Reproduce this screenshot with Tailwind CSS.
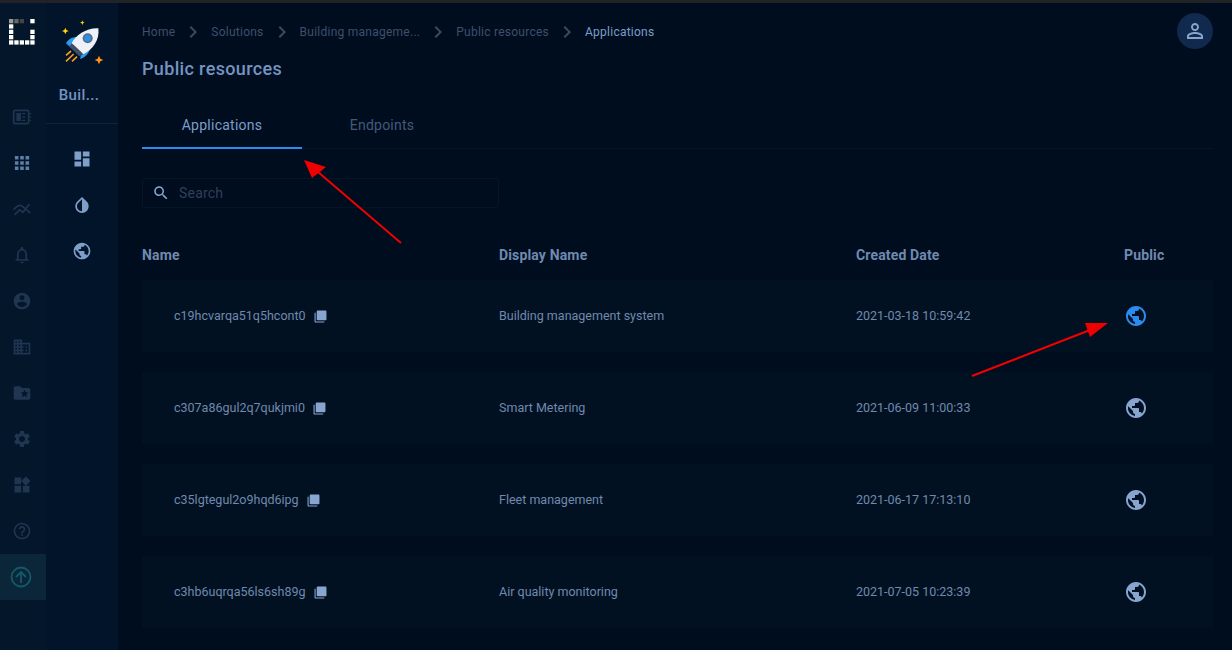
<!DOCTYPE html>
<html lang="en">
<head>
    <meta charset="UTF-8">
    <title>Applications</title>
    <script src="https://cdn.jsdelivr.net/npm/@tailwindcss/browser@4"></script>
</head>
<body class="bg-[#000d1f] font-['Roboto',sans-serif] overflow-hidden">
<div class="relative w-[1232px] h-[650px] overflow-hidden flex flex-col">
    <div class="h-[3px] bg-[#222326] shrink-0"></div>
    <div class="flex flex-1 min-h-0">
        <!-- Main rail -->
        <aside class="w-[46px] shrink-0 bg-[#03162a] flex flex-col items-center">
            <svg class="mt-[16px] mb-[49px] mr-[2px]" width="26" height="26" viewBox="0 0 26 26">
                <rect x="0" y="0" width="4.3" height="4.3" fill="#999"/><rect x="5.3" y="0" width="4.3" height="4.3" fill="#666"/><rect x="10.7" y="0" width="4.3" height="4.3" fill="#444"/><rect x="21.3" y="0" width="4.3" height="4.3" fill="#fff"/>
                <rect x="0" y="5.3" width="4.3" height="4.3" fill="#fff"/>
                <rect x="0" y="10.7" width="4.3" height="4.3" fill="#fff"/><rect x="21.3" y="10.7" width="4.3" height="4.3" fill="#fff"/>
                <rect x="0" y="16" width="4.3" height="4.3" fill="#fff"/><rect x="21.3" y="16" width="4.3" height="4.3" fill="#fff"/>
                <rect x="0" y="21.3" width="4.3" height="4.3" fill="#fff"/><rect x="5.3" y="21.3" width="4.3" height="4.3" fill="#fff"/><rect x="10.7" y="21.3" width="4.3" height="4.3" fill="#fff"/><rect x="16" y="21.3" width="4.3" height="4.3" fill="#fff"/><rect x="21.3" y="21.3" width="4.3" height="4.3" fill="#fff"/>
            </svg>
            <div class="flex flex-col w-full text-[#1f3550]">
                <div class="h-[46px] pr-[3px] flex items-center justify-center"><svg class="w-[20px] h-[20px]" viewBox="0 0 24 24" fill="none" stroke="currentColor" stroke-width="2"><rect x="2" y="4" width="18" height="16" rx="2"/><path d="M6 8h4v8H6zM12 8h4M12 12h4M12 16h4" fill="currentColor" stroke-width="1.5"/><path d="M21 8h2M21 12h2M21 16h2" stroke-width="1.5"/></svg></div>
                <div class="h-[46px] pr-[3px] flex items-center justify-center text-[#5f7ea8]"><svg class="w-[16px] h-[16px]" viewBox="3 3 18 18" fill="currentColor"><path d="M4 8h4V4H4v4zm6 12h4v-4h-4v4zm-6 0h4v-4H4v4zm0-6h4v-4H4v4zm6 0h4v-4h-4v4zm6-10v4h4V4h-4zm-6 4h4V4h-4v4zm6 6h4v-4h-4v4zm0 6h4v-4h-4v4z"/></svg></div>
                <div class="h-[46px] pr-[3px] flex items-center justify-center"><svg class="w-[20px] h-[20px]" viewBox="0 0 24 24" fill="none" stroke="currentColor" stroke-width="2"><path d="M2 13C5 9 8 7 11 8s7 6 11 9"/><path d="M3 19l6-6 4 3 8-10"/></svg></div>
                <div class="h-[46px] pr-[3px] flex items-center justify-center"><svg class="w-[20px] h-[20px]" viewBox="0 0 24 24" fill="currentColor"><path d="M12 22c1.1 0 2-.9 2-2h-4c0 1.1.9 2 2 2zm6-6v-5c0-3.07-1.63-5.64-4.5-6.32V4c0-.83-.67-1.5-1.5-1.5s-1.5.67-1.5 1.5v.68C7.64 5.36 6 7.92 6 11v5l-2 2v1h16v-1l-2-2zm-2 1H8v-6c0-2.48 1.51-4.5 4-4.5s4 2.02 4 4.5v6z"/></svg></div>
                <div class="h-[46px] pr-[3px] flex items-center justify-center"><svg class="w-[20px] h-[20px]" viewBox="0 0 24 24" fill="currentColor"><path d="M12 2C6.48 2 2 6.48 2 12s4.48 10 10 10 10-4.48 10-10S17.52 2 12 2zm0 3c1.66 0 3 1.34 3 3s-1.34 3-3 3-3-1.34-3-3 1.34-3 3-3zm0 14.2c-2.5 0-4.71-1.28-6-3.22.03-1.99 4-3.08 6-3.08 1.99 0 5.97 1.09 6 3.08-1.29 1.94-3.5 3.22-6 3.22z"/></svg></div>
                <div class="h-[46px] pr-[3px] flex items-center justify-center"><svg class="w-[20px] h-[20px]" viewBox="0 0 24 24" fill="currentColor"><path d="M12 7V3H2v18h20V7H12zM6 19H4v-2h2v2zm0-4H4v-2h2v2zm0-4H4V9h2v2zm0-4H4V5h2v2zm4 12H8v-2h2v2zm0-4H8v-2h2v2zm0-4H8V9h2v2zm0-4H8V5h2v2zm10 12h-8v-2h2v-2h-2v-2h2v-2h-2V9h8v10zm-2-8h-2v2h2v-2zm0 4h-2v2h2v-2z"/></svg></div>
                <div class="h-[46px] pr-[3px] flex items-center justify-center"><svg class="w-[20px] h-[20px]" viewBox="0 0 24 24" fill="currentColor"><path d="M20 6h-8l-2-2H4c-1.1 0-1.99.9-1.99 2L2 18c0 1.1.9 2 2 2h16c1.1 0 2-.9 2-2V8c0-1.1-.9-2-2-2zm-2.06 11L15 15.28 12.06 17l.78-3.33-2.59-2.24 3.41-.29L15 8l1.34 3.14 3.41.29-2.59 2.24.78 3.33z"/></svg></div>
                <div class="h-[46px] pr-[3px] flex items-center justify-center"><svg class="w-[20px] h-[20px]" viewBox="0 0 24 24" fill="currentColor"><path d="M19.14 12.94c.04-.3.06-.61.06-.94 0-.32-.02-.64-.07-.94l2.03-1.58c.18-.14.23-.41.12-.61l-1.92-3.32c-.12-.22-.37-.29-.59-.22l-2.39.96c-.5-.38-1.03-.7-1.62-.94l-.36-2.54c-.04-.24-.24-.41-.48-.41h-3.84c-.24 0-.43.17-.47.41l-.36 2.54c-.59.24-1.13.57-1.62.94l-2.39-.96c-.22-.08-.47 0-.59.22L2.74 8.87c-.12.21-.08.47.12.61l2.03 1.58c-.05.3-.09.63-.09.94s.02.64.07.94l-2.03 1.58c-.18.14-.23.41-.12.61l1.92 3.32c.12.22.37.29.59.22l2.39-.96c.5.38 1.03.7 1.62.94l.36 2.54c.05.24.24.41.48.41h3.84c.24 0 .44-.17.47-.41l.36-2.54c.59-.24 1.13-.56 1.62-.94l2.39.96c.22.08.47 0 .59-.22l1.92-3.32c.12-.22.07-.47-.12-.61l-2.01-1.58zM12 15.6c-1.98 0-3.6-1.62-3.6-3.6s1.62-3.6 3.6-3.6 3.6 1.62 3.6 3.6-1.62 3.6-3.6 3.6z"/></svg></div>
                <div class="h-[46px] pr-[3px] flex items-center justify-center"><svg class="w-[20px] h-[20px]" viewBox="0 0 24 24" fill="currentColor"><path d="M13 13v8h8v-8h-8zM3 21h8v-8H3v8zM3 3v8h8V3H3zm13.66-1.31L11 7.34 16.66 13l5.66-5.66-5.66-5.65z"/></svg></div>
                <div class="h-[46px] pr-[3px] flex items-center justify-center"><svg class="w-[20px] h-[20px]" viewBox="0 0 24 24" fill="currentColor"><path d="M11 18h2v-2h-2v2zm1-16C6.48 2 2 6.48 2 12s4.48 10 10 10 10-4.48 10-10S17.52 2 12 2zm0 18c-4.41 0-8-3.59-8-8s3.59-8 8-8 8 3.59 8 8-3.59 8-8 8zm0-14c-2.21 0-4 1.79-4 4h2c0-1.1.9-2 2-2s2 .9 2 2c0 2-3 1.75-3 5h2c0-2.25 3-2.5 3-5 0-2.21-1.79-4-4-4z"/></svg></div>
                <div class="h-[46px] pr-[4px] flex items-center justify-center bg-[#0b2638] text-[#125a6b]"><svg class="w-[22px] h-[22px]" viewBox="0 0 22 22" fill="none" stroke="currentColor" stroke-width="1.8"><circle cx="11" cy="11" r="9.5"/><path d="M11 17V6M6 11l5-5 5 5"/></svg></div>
            </div>
        </aside>

        <!-- Solution rail -->
        <aside class="w-[72px] shrink-0 bg-[#02142a] flex flex-col items-center">
            <div class="w-full h-[121px] border-b border-[#0e2338] flex flex-col items-center">
                <svg class="mt-[12px]" width="55" height="55" viewBox="0 0 165 165">
                    <path d="M31 38l3 7 7 3-7 3-3 7-3-7-7-3 7-3z" fill="#ffd60a"/>
                    <path d="M82 16l2 5 5 2-5 2-2 5-2-5-5-2 5-2z" fill="#ffd60a"/>
                    <path d="M132 122l4 9 9 4-9 4-4 9-4-9-9-4 9-4z" fill="#ff9417"/>
                    <path d="M33 85C40 72 52 66 66 66L48 98z" fill="#2a9bf0"/>
                    <path d="M82 102L75 132C92 127 104 114 105 96z" fill="#2a9bf0"/>
                    <path d="M130 40C135 75 112 105 85 118L50 85C62 60 95 38 130 40z" fill="#eef1f7"/>
                    <path d="M50 85L85 118L73 124L43 95z" fill="#3f4d66"/>
                    <circle cx="98" cy="70" r="15" fill="#5a6b85"/>
                    <circle cx="98" cy="70" r="10" fill="#2a8fe0"/>
                    <path d="M48 108L33 121M56 117L33 139M66 125L51 139" stroke="#f59a23" stroke-width="5" fill="none"/>
                </svg>
                <div class="mt-[15px] mr-[6px] text-[15px] leading-[20px] font-medium tracking-[0.35px] text-[#7294c4]">Buil...</div>
            </div>
            <div class="w-full flex flex-col text-[#7f9ec9]">
                <div class="h-[46px] mt-[12px] flex items-center justify-center"><svg class="w-[20px] h-[20px]" viewBox="0 0 24 24" fill="currentColor"><path d="M3 13h8V3H3v10zm0 8h8v-6H3v6zm10 0h8V11h-8v10zm0-18v6h8V3h-8z"/></svg></div>
                <div class="h-[46px] flex items-center justify-center"><svg class="w-[20px] h-[20px]" viewBox="0 0 24 24" fill="currentColor"><path d="M17.66 7.93L12 2.27 6.34 7.93c-3.12 3.12-3.12 8.19 0 11.31C7.9 20.8 9.95 21.58 12 21.58c2.05 0 4.1-.78 5.66-2.34 3.12-3.12 3.12-8.19 0-11.31zM12 19.59c-1.6 0-3.11-.62-4.24-1.76C6.62 16.69 6 15.19 6 13.59s.62-3.11 1.76-4.24L12 5.1v14.49z"/></svg></div>
                <div class="h-[46px] flex items-center justify-center"><svg class="w-[20px] h-[20px]" viewBox="0 0 24 24" fill="currentColor"><path d="M12 2C6.48 2 2 6.48 2 12s4.48 10 10 10 10-4.48 10-10S17.52 2 12 2zm-1 17.93c-3.95-.49-7-3.85-7-7.93 0-.62.08-1.21.21-1.79L9 15v1c0 1.1.9 2 2 2v1.93zm6.9-2.54c-.26-.81-1-1.39-1.9-1.39h-1v-3c0-.55-.45-1-1-1H8v-2h2c.55 0 1-.45 1-1V7h2c1.1 0 2-.9 2-2v-.41c2.93 1.19 5 4.06 5 7.41 0 2.08-.8 3.97-2.1 5.39z"/></svg></div>
            </div>
        </aside>

        <!-- Content -->
        <main class="flex-1 min-w-0 pl-[24px] pr-[19px]">
            <div class="flex items-center justify-between h-[56px]">
                <nav class="flex items-center text-[12px] tracking-[0.25px] text-[#3c506b] mt-[1px]">
                    <span>Home</span>
                    <svg class="w-[24px] h-[24px] mx-[6px] text-[#3c4a5e]" viewBox="0 0 24 24" fill="currentColor"><path d="M10 6L8.59 7.41 13.17 12l-4.58 4.59L10 18l6-6z"/></svg>
                    <span>Solutions</span>
                    <svg class="w-[24px] h-[24px] mx-[6px] text-[#3c4a5e]" viewBox="0 0 24 24" fill="currentColor"><path d="M10 6L8.59 7.41 13.17 12l-4.58 4.59L10 18l6-6z"/></svg>
                    <span>Building manageme...</span>
                    <svg class="w-[24px] h-[24px] mx-[6px] text-[#3c4a5e]" viewBox="0 0 24 24" fill="currentColor"><path d="M10 6L8.59 7.41 13.17 12l-4.58 4.59L10 18l6-6z"/></svg>
                    <span>Public resources</span>
                    <svg class="w-[24px] h-[24px] mx-[6px] text-[#3c4a5e]" viewBox="0 0 24 24" fill="currentColor"><path d="M10 6L8.59 7.41 13.17 12l-4.58 4.59L10 18l6-6z"/></svg>
                    <span class="text-[#7c9dc9]">Applications</span>
                </nav>
                <div class="w-[36px] h-[36px] rounded-full bg-[#10294d] flex items-center justify-center text-[#87a5cf]">
                    <svg class="w-[24px] h-[24px]" viewBox="0 0 24 24" fill="currentColor"><path d="M12 5.9c1.16 0 2.1.94 2.1 2.1s-.94 2.1-2.1 2.1S9.9 9.16 9.9 8s.94-2.1 2.1-2.1m0 9c2.97 0 6.1 1.46 6.1 2.1v1.1H5.9V17c0-.64 3.13-2.1 6.1-2.1M12 4C9.79 4 8 5.79 8 8s1.79 4 4 4 4-1.79 4-4-1.79-4-4-4zm0 9c-2.67 0-8 1.34-8 4v3h16v-3c0-2.66-5.33-4-8-4z"/></svg>
                </div>
            </div>
            <h1 class="text-[18px] leading-[20px] font-medium tracking-[0.35px] text-[#7594c0]">Public resources</h1>

            <!-- Tabs -->
            <div class="mt-[20px] flex h-[50px] border-b border-[#04172a]">
                <div class="w-[160px] h-[50px] pt-[5px] border-b-2 border-[#2b8cf0] flex items-center justify-center text-[14px] tracking-[0.25px] text-[#7c9dc9]">Applications</div>
                <div class="w-[160px] h-[50px] pt-[3px] flex items-center justify-center text-[14px] tracking-[0.25px] text-[#435a7a]">Endpoints</div>
            </div>

            <!-- Search -->
            <div class="mt-[29px] w-[357px] h-[30px] border border-[#04172a] rounded-[3px] flex items-center pl-[9px] gap-[9px]">
                <svg class="w-[18px] h-[18px] text-[#87a5cf]" viewBox="0 0 24 24" fill="currentColor"><path d="M15.5 14h-.79l-.28-.27C15.41 12.59 16 11.11 16 9.5 16 5.91 13.09 3 9.5 3S3 5.91 3 9.5 5.91 16 9.5 16c1.61 0 3.09-.59 4.23-1.57l.27.28v.79l5 4.99L20.49 19l-4.99-5zm-6 0C7.01 14 5 11.99 5 9.5S7.01 5 9.5 5 14 7.01 14 9.5 11.99 14 9.5 14z"/></svg>
                <span class="text-[14px] tracking-[0.2px] text-[#2e405a]">Search</span>
            </div>

            <!-- Table -->
            <div class="mt-[37px] grid grid-cols-[357px_357px_268px_89px] h-[20px] items-center text-[14px] font-bold tracking-[0.15px] text-[#6f8ab0]">
                <div>Name</div>
                <div>Display Name</div>
                <div>Created Date</div>
                <div>Public</div>
            </div>
            <div class="mt-[15px] flex flex-col gap-[20px] text-[12.5px] text-[#7089ad]">
                <div class="grid grid-cols-[357px_357px_268px_89px] h-[72px] items-center bg-[#021122]">
                    <div class="pl-[32px] flex items-center gap-[8px]">c19hcvarqa51q5hcont0 <svg class="w-[13px] h-[13px] text-[#87a5cf]" viewBox="0 0 24 24" fill="currentColor"><path d="M3 5H1v16c0 1.1.9 2 2 2h16v-2H3V5zm18-4H7c-1.1 0-2 .9-2 2v14c0 1.1.9 2 2 2h14c1.1 0 2-.9 2-2V3c0-1.1-.9-2-2-2z"/></svg></div>
                    <div>Building management system</div>
                    <div>2021-03-18 10:59:42</div>
                    <div><svg class="w-[24px] h-[24px] text-[#2b8cf0]" viewBox="0 0 24 24" fill="currentColor"><path d="M12 2C6.48 2 2 6.48 2 12s4.48 10 10 10 10-4.48 10-10S17.52 2 12 2zm-1 17.93c-3.95-.49-7-3.85-7-7.93 0-.62.08-1.21.21-1.79L9 15v1c0 1.1.9 2 2 2v1.93zm6.9-2.54c-.26-.81-1-1.39-1.9-1.39h-1v-3c0-.55-.45-1-1-1H8v-2h2c.55 0 1-.45 1-1V7h2c1.1 0 2-.9 2-2v-.41c2.93 1.19 5 4.06 5 7.41 0 2.08-.8 3.97-2.1 5.39z"/></svg></div>
                </div>
                <div class="grid grid-cols-[357px_357px_268px_89px] h-[72px] items-center bg-[#021122]">
                    <div class="pl-[32px] flex items-center gap-[8px]">c307a86gul2q7qukjmi0 <svg class="w-[13px] h-[13px] text-[#87a5cf]" viewBox="0 0 24 24" fill="currentColor"><path d="M3 5H1v16c0 1.1.9 2 2 2h16v-2H3V5zm18-4H7c-1.1 0-2 .9-2 2v14c0 1.1.9 2 2 2h14c1.1 0 2-.9 2-2V3c0-1.1-.9-2-2-2z"/></svg></div>
                    <div>Smart Metering</div>
                    <div>2021-06-09 11:00:33</div>
                    <div><svg class="w-[24px] h-[24px] text-[#87a5cf]" viewBox="0 0 24 24" fill="currentColor"><path d="M12 2C6.48 2 2 6.48 2 12s4.48 10 10 10 10-4.48 10-10S17.52 2 12 2zm-1 17.93c-3.95-.49-7-3.85-7-7.93 0-.62.08-1.21.21-1.79L9 15v1c0 1.1.9 2 2 2v1.93zm6.9-2.54c-.26-.81-1-1.39-1.9-1.39h-1v-3c0-.55-.45-1-1-1H8v-2h2c.55 0 1-.45 1-1V7h2c1.1 0 2-.9 2-2v-.41c2.93 1.19 5 4.06 5 7.41 0 2.08-.8 3.97-2.1 5.39z"/></svg></div>
                </div>
                <div class="grid grid-cols-[357px_357px_268px_89px] h-[72px] items-center bg-[#021122]">
                    <div class="pl-[32px] flex items-center gap-[8px]">c35lgtegul2o9hqd6ipg <svg class="w-[13px] h-[13px] text-[#87a5cf]" viewBox="0 0 24 24" fill="currentColor"><path d="M3 5H1v16c0 1.1.9 2 2 2h16v-2H3V5zm18-4H7c-1.1 0-2 .9-2 2v14c0 1.1.9 2 2 2h14c1.1 0 2-.9 2-2V3c0-1.1-.9-2-2-2z"/></svg></div>
                    <div>Fleet management</div>
                    <div>2021-06-17 17:13:10</div>
                    <div><svg class="w-[24px] h-[24px] text-[#87a5cf]" viewBox="0 0 24 24" fill="currentColor"><path d="M12 2C6.48 2 2 6.48 2 12s4.48 10 10 10 10-4.48 10-10S17.52 2 12 2zm-1 17.93c-3.95-.49-7-3.85-7-7.93 0-.62.08-1.21.21-1.79L9 15v1c0 1.1.9 2 2 2v1.93zm6.9-2.54c-.26-.81-1-1.39-1.9-1.39h-1v-3c0-.55-.45-1-1-1H8v-2h2c.55 0 1-.45 1-1V7h2c1.1 0 2-.9 2-2v-.41c2.93 1.19 5 4.06 5 7.41 0 2.08-.8 3.97-2.1 5.39z"/></svg></div>
                </div>
                <div class="grid grid-cols-[357px_357px_268px_89px] h-[72px] items-center bg-[#021122]">
                    <div class="pl-[32px] flex items-center gap-[8px]">c3hb6uqrqa56ls6sh89g <svg class="w-[13px] h-[13px] text-[#87a5cf]" viewBox="0 0 24 24" fill="currentColor"><path d="M3 5H1v16c0 1.1.9 2 2 2h16v-2H3V5zm18-4H7c-1.1 0-2 .9-2 2v14c0 1.1.9 2 2 2h14c1.1 0 2-.9 2-2V3c0-1.1-.9-2-2-2z"/></svg></div>
                    <div>Air quality monitoring</div>
                    <div>2021-07-05 10:23:39</div>
                    <div><svg class="w-[24px] h-[24px] text-[#87a5cf]" viewBox="0 0 24 24" fill="currentColor"><path d="M12 2C6.48 2 2 6.48 2 12s4.48 10 10 10 10-4.48 10-10S17.52 2 12 2zm-1 17.93c-3.95-.49-7-3.85-7-7.93 0-.62.08-1.21.21-1.79L9 15v1c0 1.1.9 2 2 2v1.93zm6.9-2.54c-.26-.81-1-1.39-1.9-1.39h-1v-3c0-.55-.45-1-1-1H8v-2h2c.55 0 1-.45 1-1V7h2c1.1 0 2-.9 2-2v-.41c2.93 1.19 5 4.06 5 7.41 0 2.08-.8 3.97-2.1 5.39z"/></svg></div>
                </div>
            </div>
        </main>
    </div>

    <!-- Red annotation arrows -->
    <svg class="absolute inset-0 pointer-events-none" width="1232" height="650" viewBox="0 0 1232 650">
        <path d="M401 243L318 172" stroke="#f00000" stroke-width="2" fill="none"/>
        <path d="M304 160L326 167L312 178z" fill="#f00000"/>
        <path d="M972 376L1090 330" stroke="#f00000" stroke-width="2" fill="none"/>
        <path d="M1108 323L1085 323L1090 337z" fill="#f00000"/>
    </svg>
</div>
</body>
</html>
